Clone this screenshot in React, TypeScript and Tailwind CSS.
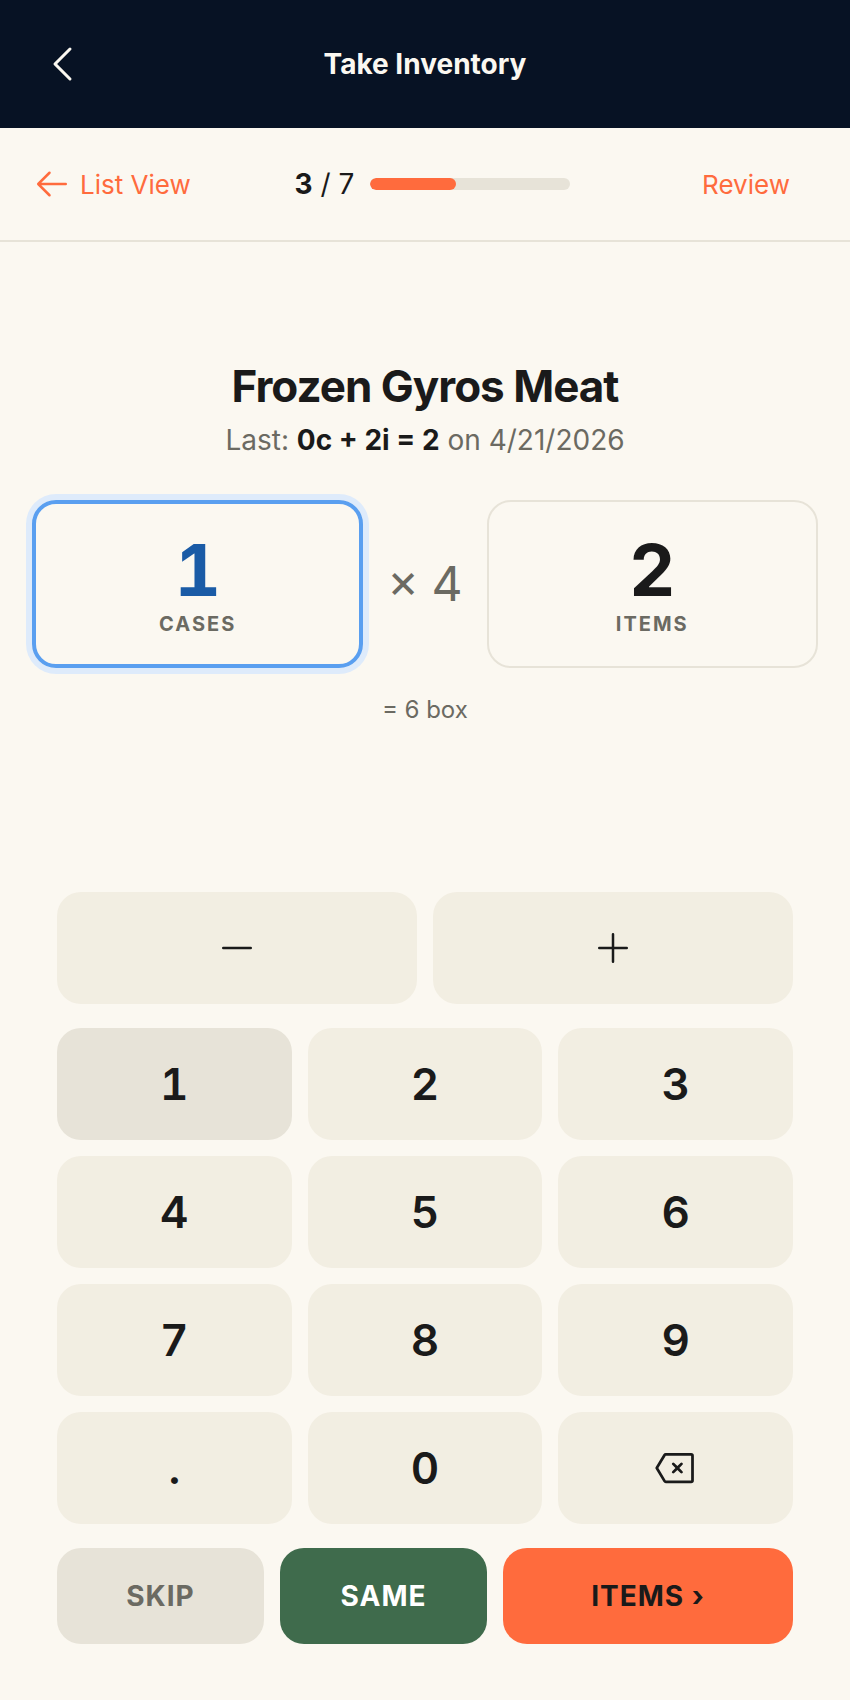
import type { ReactNode } from 'react';
import { PiArrowLeft, PiBackspace, PiCaretLeft, PiMinus, PiPlus } from 'react-icons/pi';

const digits = ['1', '2', '3', '4', '5', '6', '7', '8', '9', '.', '0'];

function Key({ children, label, pressed = false }: { children: ReactNode; label?: string; pressed?: boolean }) {
  return (
    <button
      type="button"
      aria-label={label}
      className={`flex h-28 items-center justify-center rounded-3xl text-[44px] font-semibold tabular-nums ${
        pressed ? 'bg-[#e7e3d8]' : 'bg-[#f2eee2]'
      }`}
    >
      {children}
    </button>
  );
}

function Counter({ value, label, active = false }: { value: string; label: string; active?: boolean }) {
  return (
    <button
      type="button"
      className={`flex h-42 flex-col items-center justify-center rounded-3xl pt-1 ${
        active
          ? 'border-4 border-[#5a9ff0] text-[#1a5ba6] ring-6 ring-[#deebfb]'
          : 'border-2 border-[#e7e3d8]'
      }`}
    >
      <span className="text-[72px] leading-18 font-bold tabular-nums">{value}</span>
      <span className="mt-1 text-[20px] leading-7 font-bold tracking-[2px] text-[#6b6a62]">{label}</span>
    </button>
  );
}

export default function App() {
  return (
    <div className="flex min-h-screen flex-col bg-[#fbf8f1] font-['Inter',sans-serif] text-[#1a1a1a]">
      <header className="grid h-32 grid-cols-[1fr_auto_1fr] items-center bg-[#071224] px-10 text-[#fbf8f1]">
        <button type="button" aria-label="Back" className="justify-self-start">
          <PiCaretLeft size={48} />
        </button>
        <h1 className="text-[28px] font-bold">Take Inventory</h1>
      </header>

      <nav className="flex h-[114px] items-center justify-between border-b-2 border-[#e7e3d8] px-8">
        <a href="#list" className="flex items-center gap-2 text-[26px] text-[#ff6b3d]">
          <PiArrowLeft size={40} />
          List View
        </a>
        <div className="flex items-center gap-4 text-[28px]">
          <span>
            <strong className="font-bold">3</strong> / 7
          </span>
          <div
            role="progressbar"
            aria-label="Items counted"
            aria-valuenow={3}
            aria-valuemax={7}
            className="h-3 w-50 overflow-hidden rounded-full bg-[#e7e3d8]"
          >
            <div className="h-full w-3/7 rounded-full bg-[#ff6b3d]" />
          </div>
        </div>
        <a href="#review" className="px-7 text-[26px] text-[#ff6b3d]">
          Review
        </a>
      </nav>

      <main className="flex flex-1 flex-col">
        <section className="flex flex-1 flex-col items-center justify-center px-8 pb-[46px]">
          <h2 className="text-[44px] leading-13 font-bold tracking-[-1px]">Frozen Gyros Meat</h2>
          <p className="mt-2 text-[28px] leading-10 text-[#6b6a62]">
            Last: <strong className="font-bold text-[#1a1a1a]">0c + 2i = 2</strong> on 4/21/2026
          </p>
          <div className="mt-10 grid w-full grid-cols-[1fr_auto_1fr] items-center gap-6">
            <Counter value="1" label="CASES" active />
            <span className="text-[48px] text-[#6b6a62] tabular-nums">× 4</span>
            <Counter value="2" label="ITEMS" />
          </div>
          <p className="mt-6 text-[24px] leading-9 text-[#6b6a62] tabular-nums">= 6 box</p>
        </section>

        <section className="flex flex-col gap-6 px-[57px] pb-14">
          <div className="grid grid-cols-2 gap-4">
            <Key label="Decrease">
              <PiMinus size={40} />
            </Key>
            <Key label="Increase">
              <PiPlus size={40} />
            </Key>
          </div>
          <div className="grid grid-cols-3 gap-4">
            {digits.map((digit) => (
              <Key key={digit} pressed={digit === '1'}>
                {digit}
              </Key>
            ))}
            <Key label="Backspace">
              <PiBackspace size={44} />
            </Key>
          </div>
          <div className="grid h-24 grid-cols-[1fr_1fr_1.4fr] gap-4 text-[28px] font-bold tracking-[1px]">
            <button type="button" className="rounded-3xl bg-[#e7e3d8] text-[#6b6a62]">
              SKIP
            </button>
            <button type="button" className="rounded-3xl bg-[#3f6b4c] text-white">
              SAME
            </button>
            <button type="button" className="rounded-3xl bg-[#ff6b3d]">
              ITEMS ›
            </button>
          </div>
        </section>
      </main>
    </div>
  );
}
